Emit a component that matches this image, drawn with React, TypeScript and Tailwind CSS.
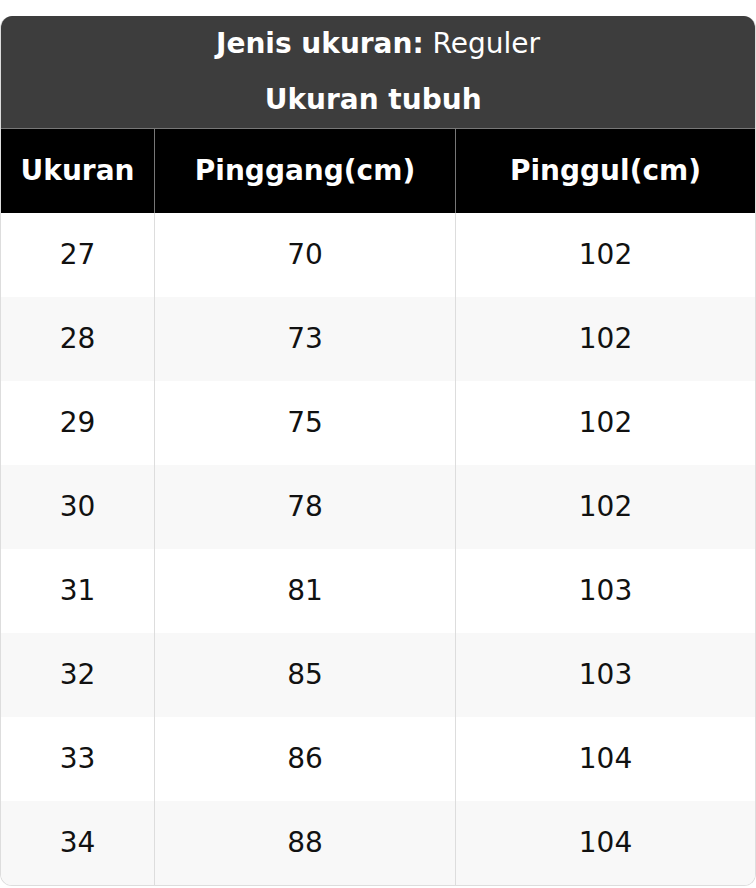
import React from "react";

const rows = [
  ["27", "70", "102"],
  ["28", "73", "102"],
  ["29", "75", "102"],
  ["30", "78", "102"],
  ["31", "81", "103"],
  ["32", "85", "103"],
  ["33", "86", "104"],
  ["34", "88", "104"],
];

export default function App() {
  return (
    <div className="w-[756px] bg-white pt-4" style={{ fontFamily: '"DejaVu Sans", sans-serif' }}>
      <div className="w-[756px] overflow-hidden rounded-[12px] border border-t-0 border-[#dddddd] text-[28px] leading-[42px]">
        <div className="bg-[#3d3d3d] text-white text-center">
          <div className="py-[7px]">
            <span className="font-bold">Jenis ukuran:</span> Reguler
          </div>
          <div className="py-[7px] font-bold">Ukuran tubuh{"\u00a0"}</div>
        </div>
        <div className="grid grid-cols-[154px_301px_1fr] bg-black text-white font-bold text-center border-t border-[#777777]">
          <div className="py-[21px] border-r border-[#777777]">Ukuran</div>
          <div className="py-[21px] border-r border-[#777777]">Pinggang(cm)</div>
          <div className="py-[21px]">Pinggul(cm)</div>
        </div>
        {rows.map((r, i) => (
          <div
            key={i}
            className={`grid grid-cols-[154px_301px_1fr] text-center text-[#111111] ${i % 2 === 1 ? "bg-[#f8f8f8]" : "bg-white"}`}
          >
            <div className="py-[21px] border-r border-[#dddddd]">{r[0]}</div>
            <div className="py-[21px] border-r border-[#dddddd]">{r[1]}</div>
            <div className="py-[21px]">{r[2]}</div>
          </div>
        ))}
      </div>
    </div>
  );
}
